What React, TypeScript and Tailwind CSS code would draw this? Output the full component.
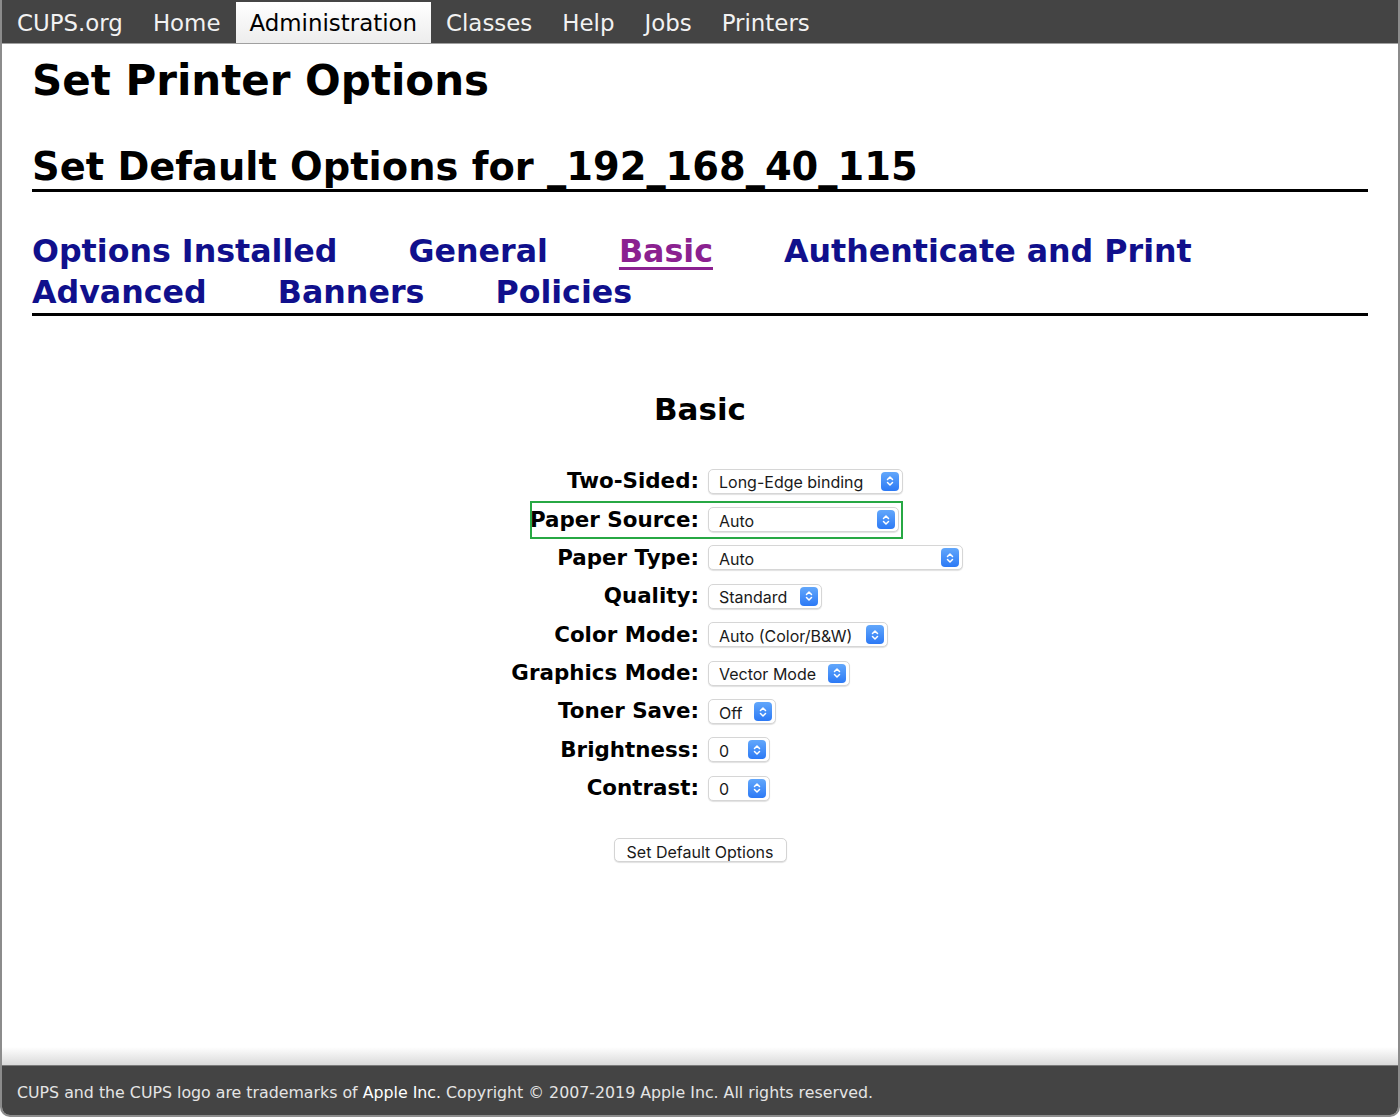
import React from "react";

const navItems = ["CUPS.org", "Home", "Administration", "Classes", "Help", "Jobs", "Printers"];

const tabs = [
  { label: "Options Installed" },
  { label: "General" },
  { label: "Basic", visited: true },
  { label: "Authenticate and Print" },
  { label: "Advanced" },
  { label: "Banners" },
  { label: "Policies" },
];

const options = [
  { label: "Two-Sided:", value: "Long-Edge binding", width: 195 },
  { label: "Paper Source:", value: "Auto", width: 191, marked: true },
  { label: "Paper Type:", value: "Auto", width: 255 },
  { label: "Quality:", value: "Standard", width: 114 },
  { label: "Color Mode:", value: "Auto (Color/B&W)", width: 180 },
  { label: "Graphics Mode:", value: "Vector Mode", width: 142 },
  { label: "Toner Save:", value: "Off", width: 68 },
  { label: "Brightness:", value: "0", width: 62 },
  { label: "Contrast:", value: "0", width: 62 },
];

const Stepper = () => (
  <span className="flex h-[19px] w-[18px] items-center justify-center rounded-[4px] bg-gradient-to-b from-[#62a7fb] to-[#2c79f5]">
    <svg width="8" height="12" viewBox="0 0 8 12" fill="none" stroke="white" strokeWidth="1.5" strokeLinecap="round" strokeLinejoin="round">
      <polyline points="1.5,4.5 4,2 6.5,4.5" />
      <polyline points="1.5,7.5 4,10 6.5,7.5" />
    </svg>
  </span>
);

const FakeSelect = ({ value, width }: { value: string; width: number }) => (
  <div
    className="flex h-[25px] items-center justify-between rounded-[5px] border border-[#d6d6d6] bg-white pl-[10px] pr-[3px] shadow-[0_1px_1px_rgba(0,0,0,0.12)] font-['Inter',sans-serif] text-[16px] text-[#1a1a1a]"
    style={{ width }}
  >
    <span className="pt-[2px]">{value}</span>
    <Stepper />
  </div>
);

export default function App() {
  return (
    <div className="flex min-h-screen flex-col overflow-hidden rounded-b-[10px] border-x-2 border-b-2 border-[#8c8c8c] bg-white font-['DejaVu_Sans',sans-serif] text-black">
      {/* NAV */}
      <nav className="flex h-[44px] items-end border-b border-[#a0a0a0] bg-[#444444]">
        {navItems.map((n) =>
          n === "Administration" ? (
            <span
              key={n}
              className="flex h-[41px] items-center bg-gradient-to-b from-white to-[#ededed] px-[14px] pt-[2px] text-[22.9px] text-black"
            >
              {n}
            </span>
          ) : (
            <span key={n} className="flex h-[41px] items-center px-[15px] pt-[2px] text-[22.9px] text-[#f2f2f2]">
              {n}
            </span>
          )
        )}
      </nav>

      <main className="flex-1 px-[30px]">
        <h1 className="mt-[13px] text-[42px] font-bold leading-[48px]">Set Printer Options</h1>
        <h2 className="mt-[40px] border-b-[3px] border-black text-[38.4px] font-bold leading-[44px]">
          Set Default Options for _192_168_40_115
        </h2>

        <div className="mt-[39px] flex flex-wrap gap-x-[71px] border-b-[3px] border-black text-[31.7px] font-bold leading-[41px]">
          {tabs.map((t) => (
            <a
              key={t.label}
              href="#"
              className={t.visited ? "text-[#8b2190] underline decoration-[3px] underline-offset-[5px]" : "text-[#10108c]"}
            >
              {t.label}
            </a>
          ))}
        </div>

        <h3 className="mt-[75px] text-center text-[31px] font-bold leading-[36px]">Basic</h3>

        <div className="mt-[35px] flex flex-col">
          {options.map((o) => (
            <div key={o.label} className="relative flex h-[38.4px] items-center">
              <div className="w-[667px] text-right text-[21.4px] font-bold">{o.label}</div>
              <div className="ml-[9px]">
                <FakeSelect value={o.value} width={o.width} />
              </div>
              {o.marked && (
                <div className="absolute left-[498px] top-[1px] h-[38px] w-[373px] border-2 border-[#27a844]" />
              )}
            </div>
          ))}
        </div>

        <div className="mt-[30px] flex justify-center">
          <button className="h-[24px] w-[173px] rounded-[5px] border border-[#d4d4d4] bg-white pt-[1px] font-['Inter',sans-serif] text-[16px] text-[#1a1a1a] shadow-[0_1px_1px_rgba(0,0,0,0.12)]">
            Set Default Options
          </button>
        </div>
      </main>

      <div className="h-[18px] bg-gradient-to-b from-white to-[#dadada]" />
      <footer className="flex h-[50px] items-center border-t border-[#7a7a7a] bg-[#444444] px-[15px] pt-[4px] text-[15.8px] text-[#e4e4e4]">
        CUPS and the CUPS logo are trademarks of&nbsp;<span className="text-white">Apple Inc.</span>&nbsp;Copyright © 2007-2019 Apple Inc. All rights reserved.
      </footer>
    </div>
  );
}
